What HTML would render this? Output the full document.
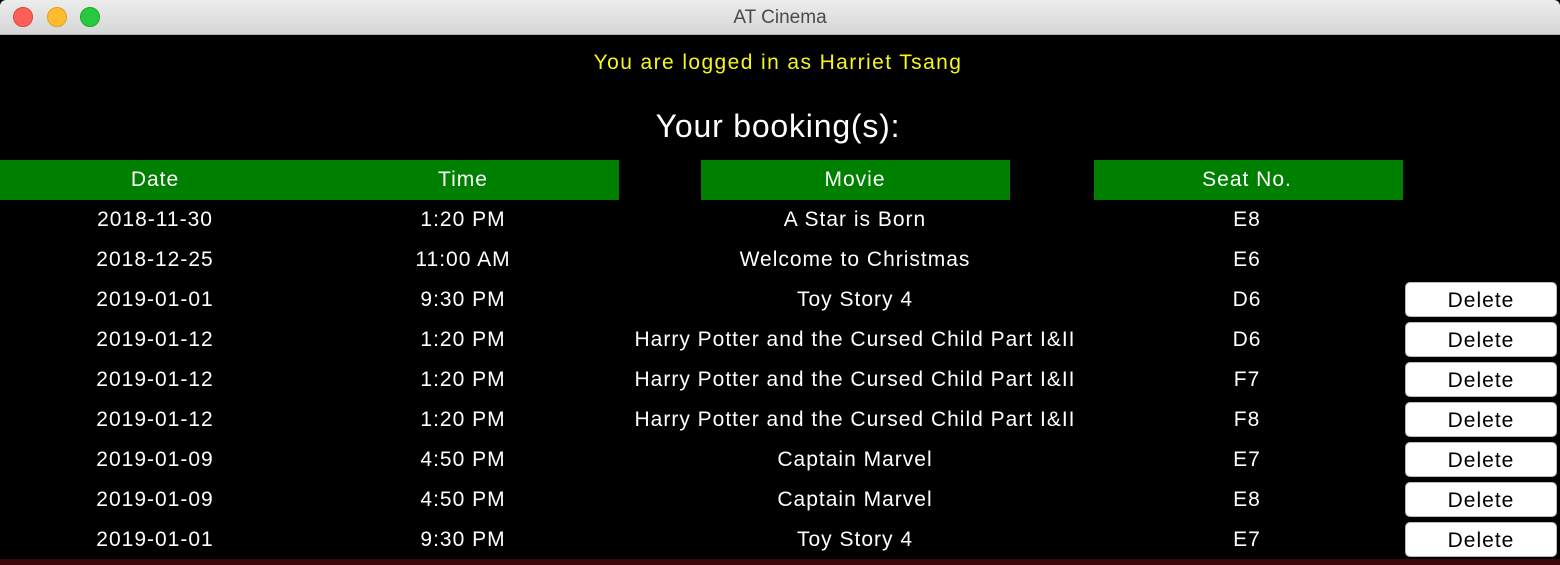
<!DOCTYPE html>
<html><head><style>
body{margin:0;width:1560px;height:565px;background:#000;overflow:hidden;position:relative;font-family:"Liberation Sans",sans-serif;color:#fff}
.tb{position:absolute;left:0;top:0;width:1560px;height:34px;background:linear-gradient(#ececec,#d6d6d6);border-bottom:1px solid #b0b0b0;border-radius:6px 6px 0 0}
.tb .t{position:absolute;width:100%;text-align:center;top:7px;font-size:19px;color:#4a4a4a}
.d{position:absolute;top:7px;width:20px;height:20px;border-radius:50%}
.c{position:absolute;text-align:center;font-size:21px;letter-spacing:1px;transform:translateX(-50%);white-space:nowrap}
.g{position:absolute;top:160px;height:40px;background:#008000}
.b{position:absolute;left:1405px;width:152px;height:35px;background:#fff;border:1px solid #bbb;border-radius:5px;color:#000;font-size:21px;letter-spacing:1px;text-align:center;line-height:35px;box-sizing:border-box}
</style></head><body>
<div class="tb"><div class="d" style="left:13px;background:#fc5f57;border:1px solid #e0443e;box-sizing:border-box"></div><div class="d" style="left:47px;background:#fdbc2e;border:1px solid #dea123;box-sizing:border-box"></div><div class="d" style="left:80px;background:#28c840;border:1px solid #1aab29;box-sizing:border-box"></div><div class="t">AT Cinema</div></div>
<div class="c" style="left:778px;top:51px;color:#f5f51f;font-size:21px;letter-spacing:1.4px">You are logged in as Harriet Tsang</div>
<div class="c" style="left:778px;top:108px;font-size:32px;letter-spacing:0.8px">Your booking(s):</div>
<div class="g" style="left:0;width:619px"></div>
<div class="g" style="left:701px;width:309px"></div>
<div class="g" style="left:1094px;width:309px"></div>
<div class="c" style="left:155px;top:168px">Date</div>
<div class="c" style="left:463px;top:168px">Time</div>
<div class="c" style="left:855px;top:168px">Movie</div>
<div class="c" style="left:1247px;top:168px">Seat No.</div>
<div id="rows"></div>
<div style="position:absolute;left:0;top:559px;width:1560px;height:6px;background:#3a0808"></div>
<script>
var r=[["2018-11-30","1:20 PM","A Star is Born","E8",0],["2018-12-25","11:00 AM","Welcome to Christmas","E6",0],["2019-01-01","9:30 PM","Toy Story 4","D6",1],["2019-01-12","1:20 PM","Harry Potter and the Cursed Child Part I&amp;II","D6",1],["2019-01-12","1:20 PM","Harry Potter and the Cursed Child Part I&amp;II","F7",1],["2019-01-12","1:20 PM","Harry Potter and the Cursed Child Part I&amp;II","F8",1],["2019-01-09","4:50 PM","Captain Marvel","E7",1],["2019-01-09","4:50 PM","Captain Marvel","E8",1],["2019-01-01","9:30 PM","Toy Story 4","E7",1]];
var h="";r.forEach(function(x,i){var y=208+i*40;h+='<div class="c" style="left:155px;top:'+y+'px">'+x[0]+'</div><div class="c" style="left:463px;top:'+y+'px">'+x[1]+'</div><div class="c" style="left:855px;top:'+y+'px">'+x[2]+'</div><div class="c" style="left:1247px;top:'+y+'px">'+x[3]+'</div>';if(x[4])h+='<div class="b" style="top:'+(y-6)+'px">Delete</div>';});
document.getElementById("rows").innerHTML=h;
</script>
</body></html>
